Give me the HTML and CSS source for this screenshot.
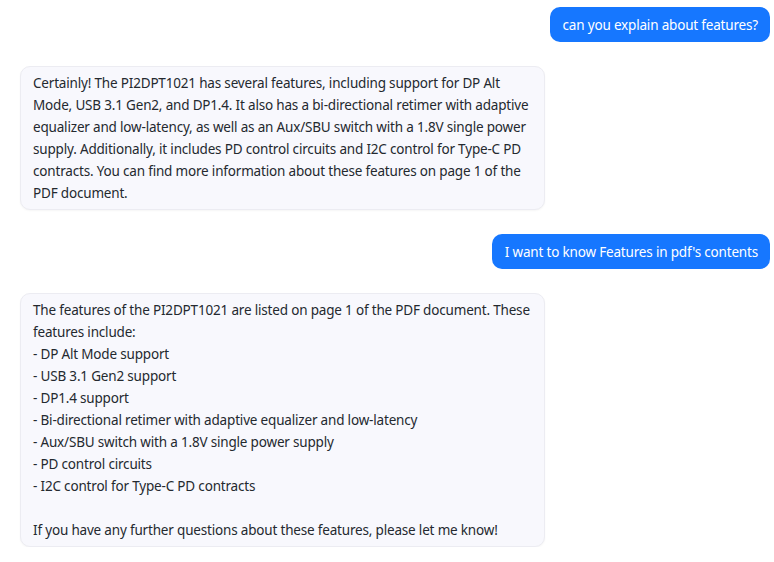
FILE: index.html
```html
<!DOCTYPE html>
<html>
<head>
<meta charset="utf-8">
<link rel="stylesheet" href="styles.css">
</head>
<body>
<div class="chat">
  <div class="msg user">can you explain about features?</div>
  <div class="msg bot">Certainly! The PI2DPT1021 has several features, including support for DP Alt Mode, USB 3.1 Gen2, and DP1.4. It also has a bi-directional retimer with adaptive equalizer and low-latency, as well as an Aux/SBU switch with a 1.8V single power supply. Additionally, it includes PD control circuits and I2C control for Type-C PD contracts. You can find more information about these features on page 1 of the PDF document.</div>
  <div class="msg user">I want to know Features in pdf's contents</div>
  <div class="msg bot pre">The features of the PI2DPT1021 are listed on page 1 of the PDF document. These features include:
- DP Alt Mode support
- USB 3.1 Gen2 support
- DP1.4 support
- Bi-directional retimer with adaptive equalizer and low-latency
- Aux/SBU switch with a 1.8V single power supply
- PD control circuits
- I2C control for Type-C PD contracts

If you have any further questions about these features, please let me know!</div>
</div>
</body>
</html>
```
FILE: styles.css
```css
html, body {
  margin: 0;
  padding: 0;
  background: #ffffff;
}
.chat {
  display: flex;
  flex-direction: column;
  gap: 24px;
  padding: 7px 4px 0 20px;
  font-family: "Noto Sans", sans-serif;
  font-size: 13.5px;
  letter-spacing: -0.18px;
  line-height: 22px;
}
.msg {
  border-radius: 10px;
  box-sizing: border-box;
}
.user {
  align-self: flex-end;
  background: #1677ff;
  color: #ffffff;
  padding: 6.5px 12px 6.5px 13px;
}
.bot {
  align-self: flex-start;
  width: 525px;
  background: #f8f8fd;
  color: #24292f;
  border: 1px solid #ececf2;
  box-shadow: 0 1px 2px rgba(0, 0, 0, 0.04);
  padding: 5px 12px;
}
.pre {
  white-space: pre-wrap;
}
```
